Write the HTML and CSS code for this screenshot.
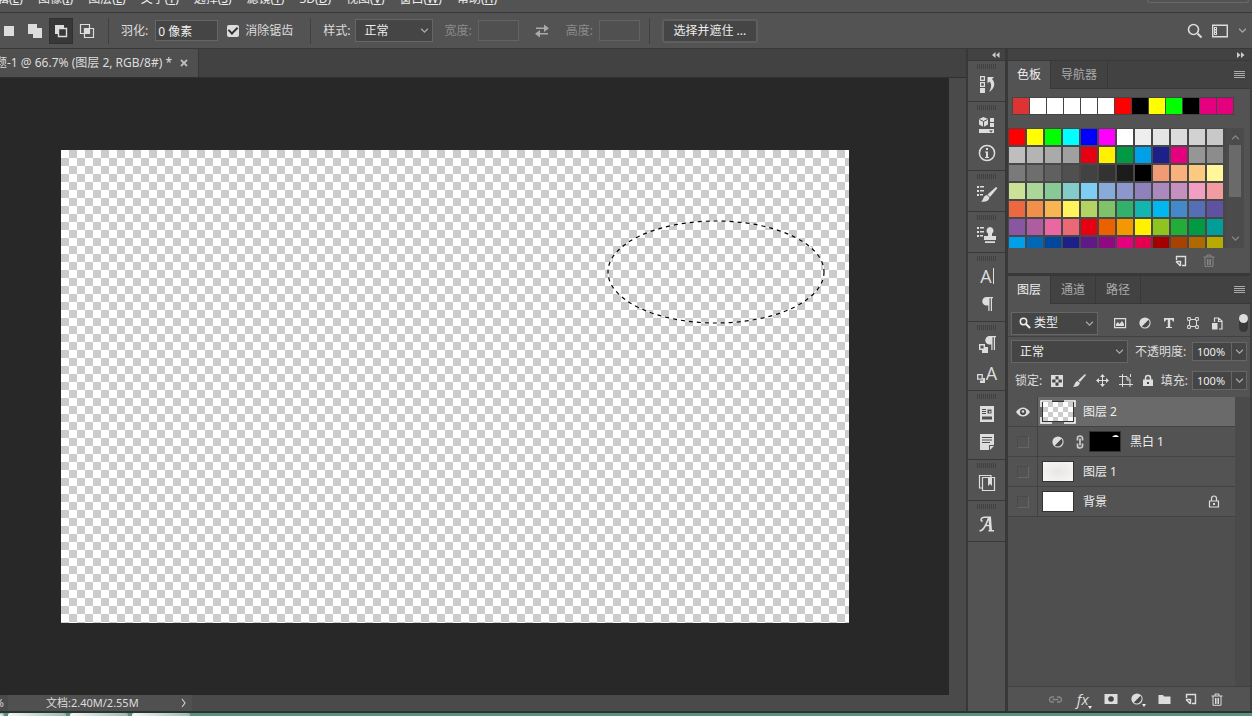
FILE: index.html
```html
<!DOCTYPE html>
<html lang="zh-CN">
<head>
<meta charset="utf-8">
<title>图像编辑器</title>
<link rel="stylesheet" href="styles.css">
</head>
<body>
<svg class="defs" aria-hidden="true">
  <symbol id="chev" viewBox="0 0 8 8"><path d="M1 2.5 4 5.5 7 2.5" fill="none" stroke="currentColor" stroke-width="1.1"/></symbol>
  <symbol id="half" viewBox="0 0 12 12"><circle cx="6" cy="6" r="5.6" fill="currentColor"/><path d="M2.8 9.6A4.900 4.900 0 0 0 9.600 2.800Z" fill="#484848"/></symbol>
  <symbol id="new" viewBox="0 0 12 12"><path d="M1.500 5V1.500h9v9H7M1 6.500h4.500v4.500M1 6.500 5.500 11" fill="none" stroke="currentColor" stroke-width="1.4"/></symbol>
  <symbol id="trash" viewBox="0 0 12 13"><path d="M.5 3h11M4 3V1h4v2M2 3v9.300h8V3M4.500 5v6M6 5v6M7.500 5v6" fill="none" stroke="currentColor"/></symbol>
  <symbol id="menu" viewBox="0 0 11 8"><path d="M0 .5h11M0 2.500h11M0 4.500h11M0 6.500h11" stroke="currentColor"/></symbol>
  <symbol id="para" viewBox="0 0 12 16"><path d="M5.500 1H12v1.200h-1V15H9.800V2.200H8.500V15H7.300V9.500H5.500A4.200 4.200 0 0 1 5.500 1Z" fill="currentColor"/></symbol>
</svg>
<div class="app">
  <nav class="menubar">
    <a href="#">编辑(<u>E</u>)</a><a href="#">图像(<u>I</u>)</a><a href="#">图层(<u>L</u>)</a><a href="#">文字(<u>Y</u>)</a><a href="#">选择(<u>S</u>)</a><a href="#">滤镜(<u>T</u>)</a><a href="#">3D(<u>D</u>)</a><a href="#">视图(<u>V</u>)</a><a href="#">窗口(<u>W</u>)</a><a href="#">帮助(<u>H</u>)</a>
    <span class="winbtns"></span>
  </nav>

  <header class="options">
    <div class="modes">
      <button class="mode" aria-label="新选区"><svg width="16" height="16"><path d="M3 3h10v10H3z" fill="#ddd"/></svg></button>
      <button class="mode" aria-label="添加到选区"><svg width="16" height="16"><path d="M1 1h9v4h5v10H6v-4H1z" fill="#ddd"/></svg></button>
      <button class="mode on" aria-label="从选区减去"><svg width="16" height="16"><path d="M2 2h9v3H5v6H2z" fill="#ddd"/><path d="M5.500 5.500h8v8h-8z" fill="#383838" stroke="#ddd" stroke-width="1.4"/></svg></button>
      <button class="mode" aria-label="与选区交叉"><svg width="16" height="16"><path d="M1.500 1.500h9v9h-9zM5.500 5.500h9v9h-9z" fill="none" stroke="#ddd" stroke-width="1.200"/><path d="M6 6h5v5H6z" fill="#ddd"/></svg></button>
    </div>
    <div class="opt first"><label for="feather">羽化:</label><input id="feather" class="field wide" value="0 像素"></div>
    <div class="opt check"><input type="checkbox" id="aa" checked><label for="aa">消除锯齿</label></div>
    <div class="opt style"><label for="style">样式:</label>
      <span class="pick"><select id="style"><option>正常</option></select><svg width="9" height="9"><use href="#chev"/></svg></span></div>
    <div class="opt dim"><label for="w">宽度:</label><input id="w" class="field" disabled></div>
    <button class="swap" aria-label="交换"><svg width="16" height="14"><path d="M2 3.500h8V.500l5 3.800-5 3.700V5H2zM14 9H6V6L1 9.700l5 3.800v-3h8z" fill="#aaa"/></svg></button>
    <div class="opt dim"><label for="h">高度:</label><input id="h" class="field" disabled></div>
    <div class="opt mask"><button class="push">选择并遮住 ...</button></div>
    <div class="right">
      <button aria-label="搜索"><svg width="16" height="16"><circle cx="6.500" cy="6.500" r="5" fill="none" stroke="#ddd" stroke-width="1.600"/><path d="m10.500 10.500 4 4" stroke="#ddd" stroke-width="2"/></svg></button>
      <button aria-label="工作区"><svg width="16" height="14"><path d="M.7 1.200h14.600v11.600H.7z" fill="none" stroke="#ddd" stroke-width="1.400"/><path d="M2 3h3v8H2z" fill="#ddd"/><path d="M3 4h1v1H3zm0 2.500h1v1H3zM3 9h1v1H3z" fill="#444"/></svg></button>
      <svg width="9" height="9"><use href="#chev"/></svg>
    </div>
  </header>

  <div class="main">
    <section class="document">
      <div class="doctabs"><div class="doctab"><span>题-1 @ 66.7% (图层 2, RGB/8#) *</span><button aria-label="关闭"><svg width="8" height="8"><path d="m1 1 6 6M7 1 1 7" stroke="#bbb" stroke-width="1.800"/></svg></button></div></div>
      <div class="view">
        <div class="desk"><div class="paper"><svg class="ants" width="220" height="106"><g fill="none" transform="translate(110 53)"><ellipse rx="108" ry="51" stroke="#fff"/><ellipse rx="108" ry="51" stroke="#000" stroke-width="1.200" stroke-dasharray="4 4"/></g></svg></div></div>
        <div class="vscroll"></div>
      </div>
      <footer class="status"><span class="pct">%</span><span class="info">文档:2.40M/2.55M</span><button aria-label="更多"><svg width="8" height="10"><path d="m2 1 3 4-3 4" fill="none" stroke="#ccc" stroke-width="1.200"/></svg></button></footer>
    </section>

    <aside class="dock">
      <div class="fold"><svg width="8" height="6"><path d="M3.500 0v6L0 3zM7.500 0v6L4 3z" fill="#ccc"/></svg></div>
      <div class="group"><button aria-label="历史记录"><svg width="18" height="20"><path d="M2.600 2.600h3.800v3.800H2.600zM2.600 8.600h3.800v3.800H2.600z" fill="none" stroke="#ddd" stroke-width="1.200"/><path d="M2 14h5v5H2zM9.500 3H16l-2 2c4 4 2.500 10-3 13 2.500-4 3-8 .5-10.500L9.500 9.500z" fill="#ddd"/></svg></button></div>
      <div class="group"><button aria-label="库"><svg width="18" height="20"><path d="m5.500 2 4.500 2v5.500l-4.500 2.500L1 9.500V4zM12 3h4v4h-4zM12 8h4v4h-4zM1 14h15v4H1z" fill="#ddd"/><path d="m1.500 4.500 4 2 4-2M5.500 6.500V12" fill="none" stroke="#535353"/><path d="M11 15.500h4l-2 2z" fill="#444"/></svg></button>
        <button aria-label="信息"><svg width="18" height="18"><circle cx="9" cy="9" r="7.600" fill="none" stroke="#ddd" stroke-width="1.500"/><path d="M8 4h2v2H8zM7 7.500h3V13h1v1H7v-1h1V8.500H7z" fill="#ddd"/></svg></button></div>
      <div class="group"><button aria-label="画笔设置"><svg width="22" height="20"><path d="M1 2h2v2H1zm3 0h4v1.500H4zM1 6h2v2H1zm3 0h4v1.500H4zM1 10h2v2H1zm3 0h3v1.500H4zM20 3l1.500 1-7.500 9-2.500-2.500zM11 11l2.500 2.500C13 17 9 18.500 5 17.500c2.500-1 2-6 6-6.500z" fill="#ddd"/></svg></button></div>
      <div class="group"><button aria-label="仿制源"><svg width="22" height="20"><path d="M1 2h2v2H1zm3 0h4v1.500H4zM1 6h2v2H1zm3 0h4v1.500H4zM1 10h2v2H1zm3 0h3v1.500H4zM14 2a3.600 3.600 0 0 1 2 6.500V11h4v4H8v-4h4V8.500A3.600 3.600 0 0 1 14 2zM9 16.300h10V18H9z" fill="#ddd"/></svg></button></div>
      <div class="group"><button class="glyph" aria-label="字符">A<i></i></button>
        <button aria-label="段落"><svg width="14" height="16"><use href="#para"/></svg></button></div>
      <div class="group"><button aria-label="段落样式"><svg width="18" height="20"><path d="M1.700 9.700h4.600v4.600H1.700z" fill="none" stroke="#ddd" stroke-width="1.400"/><path d="M7 12h3v6H4v-3h3z" fill="#ddd"/><use href="#para" x="6" y="0" width="12" height="16"/></svg></button>
        <button class="glyph" aria-label="字符样式"><svg width="9" height="10"><path d="M.7.700h4.500v4.500H.7z" fill="none" stroke="#ddd" stroke-width="1.300"/><path d="M6 4h2v5H3V6.500h3z" fill="#ddd"/></svg>A</button></div>
      <div class="group"><button aria-label="属性"><svg width="16" height="18"><path d="M1 1h14v16H1z" fill="#ddd"/><path d="M3 4.500h4M3 6.500h4M3 8.500h4" stroke="#505050"/><path d="M8.500 4.500h4v4h-4zM3 11.500h10v3H3z" fill="#505050"/><path d="M10 6h1.500v1.500H10z" fill="#ddd"/></svg></button>
        <button aria-label="注释"><svg width="16" height="18"><path d="M1 1h14v11h-5v5H1zM11 13h4l-4 4z" fill="#ddd"/><path d="M3 4.500h10M3 7h10M3 9.500h8" stroke="#505050"/></svg></button></div>
      <div class="group"><button aria-label="图层复合"><svg width="18" height="18"><path d="M4.500 3.500h12v13h-12zM4 14H1.500V1.500H13V3" fill="none" stroke="#ddd" stroke-width="1.200"/><path d="M10 3h4v9l-2-2-2 2z" fill="#ddd"/></svg></button></div>
      <div class="group"><button aria-label="字形"><svg width="18" height="18"><path d="M1.500 15.500c4 1.500 7-7 9.500-13.500l1.500 13.500M10.500 15.800H16M6.500 10.500h6M4.500 6.500C2 5.500 3 2.500 6 2.300h7" fill="none" stroke="#ddd" stroke-width="1.500"/><path d="m10.500 3 2.500-1 1 13.500h-2.500z" fill="#ddd"/></svg></button></div>
    </aside>

    <aside class="panels">
      <div class="fold end"><svg width="8" height="6"><path d="M0 0v6l3.500-3zM4 0v6l3.500-3z" fill="#ccc"/></svg></div>
      <section class="swatches">
        <div class="tabs"><button class="on">色板</button><button>导航器</button><svg class="burger" width="11" height="8"><use href="#menu"/></svg></div>
        <div class="recent" id="recent"></div>
        <div class="sw"><div class="grid" id="grid"></div>
          <div class="bar"><svg width="9" height="9" class="up"><use href="#chev"/></svg><i></i><svg width="9" height="9" class="down"><use href="#chev"/></svg></div></div>
        <div class="swfoot"><button aria-label="新建色板"><svg width="12" height="12"><use href="#new"/></svg></button><button class="off" aria-label="删除色板"><svg width="12" height="13"><use href="#trash"/></svg></button></div>
      </section>

      <section class="layers">
        <div class="tabs"><button class="on">图层</button><button>通道</button><button>路径</button><svg class="burger" width="11" height="8"><use href="#menu"/></svg></div>
        <div class="filter">
          <span class="pick kind"><svg class="mag" width="12" height="12"><circle cx="4.500" cy="4.500" r="3.200" fill="none" stroke="#eee" stroke-width="1.500"/><path d="m7 7 4 4" stroke="#eee" stroke-width="2.200"/></svg><select aria-label="类型"><option>类型</option></select><svg width="9" height="9"><use href="#chev"/></svg></span>
          <div class="kinds">
            <button aria-label="像素"><svg width="14" height="12"><path d="M1.600 1.600h11v9h-11z" fill="none" stroke="#ddd" stroke-width="1.200"/><path d="M3 9V7l2-2 1.500 2L9 4l2 3v2z" fill="#ddd"/></svg></button>
            <button aria-label="调整"><svg width="12" height="12"><use href="#half"/></svg></button>
            <button aria-label="文字"><svg width="12" height="12"><path d="M1 1h10v3.500H9.800L9 2.800H7.200V10H9v1H3v-1h1.800V2.800H3l-.8 1.700H1z" fill="#ddd"/></svg></button>
            <button aria-label="形状"><svg width="12" height="12"><path d="M2.500 2.500h7v7h-7z" fill="none" stroke="#ddd"/><path d="M.6.600h2.800v2.800H.6zM8.600.600h2.800v2.800H8.600zM.6 8.600h2.800v2.800H.6zM8.600 8.600h2.800v2.800H8.600z" fill="#535353" stroke="#ddd"/></svg></button>
            <button aria-label="智能对象"><svg width="12" height="13"><path d="M3.500 5V1h4l3.500 3v8H8M7.500 1v3.500H11" fill="none" stroke="#ddd" stroke-width="1.200"/><path d="M1 6h5.500v6.500H1z" fill="#ddd"/></svg></button>
          </div>
          <span class="toggle"></span>
        </div>
        <div class="blend"><span class="pick mode-pick"><select aria-label="混合模式"><option>正常</option></select><svg width="9" height="9"><use href="#chev"/></svg></span>
          <label for="op">不透明度:</label><span class="num"><input id="op" value="100%"><button aria-label="不透明度滑块"><svg width="9" height="9"><use href="#chev"/></svg></button></span></div>
        <div class="blend lock"><span>锁定:</span>
          <div class="locks">
            <button aria-label="透明像素"><svg width="12" height="12"><path d="M.6.600h10.800v10.800H.6z" fill="#444" stroke="#ddd" stroke-width="1.200"/><path d="M4.500 4.500h3v3h-3zM1 1h3.500v3.500H1zM7.500 1H11v3.500H7.500zM1 7.500h3.500V11H1zM7.500 7.500H11V11H7.500z" fill="#ddd"/></svg></button>
            <button aria-label="图像像素"><svg width="13" height="13"><path d="m12 0 1 1-6 7-2-1.500zM4.500 7 7 9c-1 3-4 4-7 4 2-2 1.500-5 4.500-6z" fill="#ddd"/></svg></button>
            <button aria-label="位置"><svg width="13" height="13"><path d="M6.500 1v11M1 6.500h11" stroke="#ddd"/><path d="m6.500 0 2.500 3H4zM6.500 13 9 10H4zM0 6.500 3 4v5zM13 6.500 10 4v5z" fill="#ddd"/></svg></button>
            <button aria-label="画板"><svg width="14" height="13"><path d="M3.500 0v13M0 2.500h8l3 3V13M0 10.500h14M11.500 0v3M8 3v3h3" fill="none" stroke="#ddd"/></svg></button>
            <button aria-label="全部"><svg width="10" height="13"><path d="M2.500 6V4a2.500 2.500 0 0 1 5 0v2" fill="none" stroke="#ddd" stroke-width="1.500"/><path d="M0 5.500h10V12H0z" fill="#ddd"/><path d="M4 8h2v2H4z" fill="#444"/></svg></button>
          </div>
          <label for="fill">填充:</label><span class="num"><input id="fill" value="100%"><button aria-label="填充滑块"><svg width="9" height="9"><use href="#chev"/></svg></button></span></div>
        <div class="listwrap">
          <ul class="list">
            <li class="sel"><button class="eye" aria-label="可见"><svg width="14" height="10"><path d="M0 5c4-6 10-6 14 0-4 6-10 6-14 0z" fill="#ddd"/><circle cx="7" cy="5" r="3" fill="#444"/><circle cx="7" cy="4.500" r="1.300" fill="#ddd"/></svg></button>
              <div class="row"><span class="frame"><span class="thumb check8"></span><svg width="36" height="24"><path d="M1 7V1h11M24 1h11v6M35 17v6H24M12 23H1v-6" fill="none" stroke="#fff" stroke-width="1.500"/></svg></span><span class="name">图层 2</span></div></li>
            <li><button class="eye" aria-label="隐藏"><i></i></button>
              <div class="row adj"><svg width="12" height="12"><use href="#half"/></svg><svg class="chain" width="8" height="14"><path d="M1.500 5.500V3a2.500 2 0 0 1 5 0v2.500M1.500 8.500V11a2.500 2 0 0 0 5 0V8.500M4 3.500v7" fill="none" stroke="#ccc" stroke-width="1.700"/></svg><span class="thumb black"><svg width="30" height="18"><path d="M22 5q4-4 7 0z" fill="#fff"/></svg></span><span class="name">黑白 1</span></div></li>
            <li><button class="eye" aria-label="隐藏"><i></i></button>
              <div class="row"><span class="thumb soft"></span><span class="name">图层 1</span></div></li>
            <li><button class="eye" aria-label="隐藏"><i></i></button>
              <div class="row"><span class="thumb"></span><span class="name">背景</span><svg class="padlock" width="12" height="13"><path d="M3.500 6V3.500a2.500 2.500 0 0 1 5 0V6M1.500 6h9v6h-9z" fill="none" stroke="#ddd" stroke-width="1.200"/><path d="M5 8h2v2H5z" fill="#ddd"/></svg></div></li>
          </ul>
          <div class="gutter"></div>
        </div>
        <div class="tools">
          <button class="off" aria-label="链接图层"><svg width="15" height="9"><path d="M6 2H4a2.500 2.500 0 0 0 0 5h2M9 2h2a2.500 2.500 0 0 1 0 5H9M4.500 4.500h6" fill="none" stroke="currentColor" stroke-width="1.300"/></svg></button>
          <button class="fx" aria-label="图层样式">fx<svg width="4" height="3"><path d="M0 0h4L2 3z" fill="#eee"/></svg></button>
          <button aria-label="蒙版"><svg width="14" height="12"><path d="M.5 1h13v10H.5z" fill="#ddd"/><circle cx="7" cy="6" r="2.800" fill="#444"/></svg></button>
          <button class="fx" aria-label="调整图层"><svg width="12" height="12"><use href="#half"/></svg><svg width="4" height="3"><path d="M0 0h4L2 3z" fill="#eee"/></svg></button>
          <button aria-label="新建组"><svg width="13" height="11"><path d="M.5 1H5l1 1.500h6.500V10H.5z" fill="#ddd"/></svg></button>
          <button aria-label="新建图层"><svg width="12" height="12"><use href="#new"/></svg></button>
          <button aria-label="删除图层"><svg width="12" height="13"><use href="#trash"/></svg></button>
        </div>
      </section>
    </aside>
  </div>
  <div class="strip"><i></i><i></i><i></i><i></i></div>
</div>
<script src="app.js"></script>
</body>
</html>
```
FILE: styles.css
```css
* { box-sizing: border-box; }
body { margin: 0; overflow: hidden; background: #535353; color: #ddd; font: 12px/16px "Noto Sans", "Noto Sans CJK SC", sans-serif; }
button { display: flex; align-items: center; justify-content: center; border: 0; padding: 0; background: none; color: inherit; font: inherit; }
input, select { font: inherit; color: #eee; border: 1px solid #666; background: #454545; min-width: 0; margin: 0; }
svg { display: block; flex: none; }
.defs { position: absolute; width: 0; height: 0; }
.app { display: flex; flex-direction: column; height: 100vh; }

.menubar { flex: none; height: 13px; display: flex; align-items: flex-end; gap: 15px; padding: 0 3px 5px 0; margin-left: -15px; overflow: hidden; border-bottom: 1px solid #383838; }
.menubar a { color: #eee; text-decoration: none; white-space: nowrap; }
.winbtns { margin-left: auto; align-self: flex-start; width: 102px; height: 3px; border: 1px solid #696969; border-top: 0; border-radius: 0 0 3px 3px; }

.options { flex: none; height: 36px; display: flex; align-items: center; border-bottom: 1px solid #383838; white-space: nowrap; }
.modes { display: flex; gap: 2px; padding-right: 9px; margin-left: -3px; }
.mode { width: 24px; height: 26px; }
.mode.on { background: #383838; border: 1px solid #303030; }
.opt { display: flex; align-items: center; gap: 6px; margin-right: 9px; }
.first, .style, .mask { border-left: 1px solid #404040; padding-left: 12px; height: 26px; }
.first { gap: 7px; }
.check { margin-right: 17px; }
.style { margin-right: 11px; }
.style label { margin-right: -1px; }
.field { width: 41px; height: 21px; padding: 0 2px; }
.wide { width: 63px; }
.dim { color: #8b8b8b; }
.dim .field { background: #505050; border-color: #636363; }
.check input { appearance: none; width: 12px; height: 12px; border: 0; border-radius: 2px; background: #ddd; display: grid; place-items: center; }
.check input:checked::after { content: ""; width: 4px; height: 7px; border: solid #333; border-width: 0 2px 2px 0; transform: rotate(45deg); margin-bottom: 2px; }
.swap { margin: 0 16px 0 6px; }
.push { width: 96px; height: 24px; background: #454545; border: 2px solid #5e5e5e; border-radius: 3px; color: #eee; }
.right { margin-left: auto; display: flex; align-items: center; gap: 15px; padding-right: 5px; }
.right svg:last-child { margin-left: -5px; color: #aaa; }
.right button:first-child svg { margin-right: -1px; }
.pick { display: grid; align-items: center; grid-template-columns: 1fr 9px 4px; width: 78px; height: 23px; color: #aaa; }
.pick select { grid-area: 1 / 1 / 2 / 4; width: 100%; height: 100%; appearance: none; padding: 0 8px; }
.pick > svg:last-child { grid-area: 1 / 2; z-index: 1; pointer-events: none; }

.main { flex: 1; min-height: 0; display: flex; }
.document { flex: 1; min-width: 0; display: flex; flex-direction: column; border-right: 2px solid #383838; }
.doctabs { flex: none; height: 29px; display: flex; background: #424242; border-bottom: 1px solid #303030; }
.doctab { display: flex; align-items: center; gap: 8px; padding-right: 10px; background: #4f4f4f; border-right: 1px solid #383838; white-space: nowrap; width: 199px; justify-content: flex-end; }
.view { flex: 1; display: flex; min-height: 0; }
.desk { flex: 1; display: flex; background: #282828; padding: 72px 100px 72px 61px; }
.paper { flex: 1; position: relative; background: repeating-conic-gradient(#ccc 0 25%, #fff 0 50%) 0 0 / 16px 16px; }
.ants { position: absolute; left: 545px; top: 69px; }
.vscroll { width: 17px; background: #4a4a4a; }
.status { flex: none; height: 16px; display: flex; align-items: center; background: #4a4a4a; font-size: 11px; }
.status .pct { width: 8px; display: flex; justify-content: flex-end; padding-right: 4px; }
.status .info { background: #505050; padding-left: 38px; width: 168px; }
.status button { width: 16px; height: 16px; background: #505050; }

.fold { flex: none; height: 12px; display: flex; align-items: center; justify-content: center; padding-left: 18px; background: #424242; border-bottom: 1px solid #383838; }
.fold.end { justify-content: flex-end; padding-right: 5px; }
.dock { width: 38px; flex: none; border-right: 1px solid #383838; }
.group { border-bottom: 1px solid #383838; padding: 3px 0; }
.group::before { content: ""; display: block; width: 20px; height: 5px; margin: 0 auto; background: repeating-linear-gradient(90deg, #404040 0 1px, #535353 1px 2px); }
.group button { width: 100%; height: 29px; padding-left: 1px; }
.group button + button { height: 28px; }
.glyph { font-size: 18px; font-family: "Open Sans", sans-serif; }
.glyph i { width: 1px; height: 16px; background: #ddd; margin-left: 1px; }
.glyph svg { align-self: flex-end; margin-bottom: 3px; }

.panels { flex: none; width: 246px; display: flex; flex-direction: column; border-left: 2px solid #383838; border-right: 2px solid #404040; }
.tabs { display: flex; height: 28px; background: #424242; border-bottom: 1px solid #383838; align-items: center; color: #aaa; }
.tabs button { height: 28px; padding: 0 10px; border-right: 1px solid #383838; }
.tabs .on { background: #535353; color: #eee; padding: 0 9px; }
.burger { margin: 0 5px 0 auto; }
.swatches { flex: none; border-bottom: 3px solid #383838; }
.recent { display: flex; gap: 1px; width: max-content; margin: 8px 0 0 4px; background: #444; border: 1px solid #444; }
.recent i { width: 16px; height: 16px; }
.sw { display: flex; height: 120px; margin-top: 13px; overflow: hidden; }
.grid { display: grid; grid-template-columns: repeat(12, 16px); grid-auto-rows: 16px; gap: 2px; padding: 1px 3px 0 1px; background: #484848; }
.bar { width: 18px; background: #4b4b4b; display: flex; flex-direction: column; align-items: center; color: #888; padding: 5px 0; }
.bar i { width: 12px; height: 52px; background: #6a6a6a; margin: 3px 0 auto; }
.up { transform: rotate(180deg); }
.swfoot { display: flex; justify-content: flex-end; align-items: center; gap: 16px; height: 25px; padding-right: 35px; }
.off { color: #888; }

.layers { flex: 1; display: flex; flex-direction: column; min-height: 0; white-space: nowrap; }
.filter { display: flex; align-items: center; height: 33px; padding: 7px 2px 1px 3px; border-bottom: 1px solid #404040; }
.kind { width: 87px; }
.kind select { padding-left: 22px; }
.kind .mag { grid-area: 1 / 1; z-index: 1; margin-left: 8px; pointer-events: none; }
.kinds { display: flex; flex: 1; justify-content: space-between; padding: 0 16px 0 15px; }
.toggle { width: 9px; height: 18px; border-radius: 5px; background: #383838; }
.toggle::before { content: ""; display: block; width: 9px; height: 9px; border-radius: 50%; background: #ddd; }
.blend { display: flex; align-items: center; height: 29px; padding: 0 3px; }
.mode-pick { width: 117px; margin-right: 7px; }
.blend .num { margin-left: auto; }
.lock { padding-left: 7px; }
.lock label { margin-right: 4px; }
.num { display: flex; width: 55px; height: 19px; border: 1px solid #666; background: #454545; color: #aaa; }
.num input { flex: 1; border: 0; padding: 0 4px; background: none; font-size: 11px; }
.num button { width: 15px; border-left: 1px solid #666; }
.locks { display: flex; flex: 1; justify-content: space-between; padding: 0 8px 0 9px; }
.listwrap { flex: 1; display: flex; background: #4f4f4f; min-height: 0; margin-top: 2px; }
.list { flex: 1; list-style: none; margin: 0; padding: 0; }
.list li { display: flex; height: 30px; background: #535353; border-bottom: 1px solid #434343; }
.eye { width: 30px; border-right: 1px solid #434343; }
.eye i { width: 12px; height: 12px; border: 1px solid #666; border-top-color: #4a4a4a; border-left-color: #4a4a4a; }
.row { flex: 1; display: flex; align-items: center; padding: 0 15px 0 4px; gap: 9px; }
.sel .row { background: #6a6a6a; padding-left: 2px; gap: 7px; }
.thumb { width: 32px; height: 21px; background: #fff; border: 1px solid #333; }
.frame { display: grid; place-items: center; }
.frame > * { grid-area: 1 / 1; }
.check8 { background: repeating-conic-gradient(#ccc 0 25%, #fff 0 50%) 0 0 / 10px 10px; }
.black { background: #000; }
.soft { background: radial-gradient(#e8e6e3, #f8f7f6); }
.adj { padding-left: 14px; }
.adj .chain { margin: 0 -4px 0 3px; }
.name { color: #eee; }
.padlock { margin-left: auto; }
.gutter { width: 15px; background: #4a4a4a; }
.tools { flex: none; height: 25px; display: flex; align-items: center; justify-content: space-between; border-top: 1px solid #404040; padding: 0 27px 0 40px; }
.fx { font: italic 15px/16px "Open Sans", sans-serif; }
.fx svg:last-child { align-self: flex-end; margin-left: -1px; margin-right: -2px; margin-bottom: -2px; }

.strip { flex: none; height: 5px; display: flex; gap: 4px; background: #5c8f80; border-top: 2px solid #2a3532; }
.strip i { width: 58px; background: linear-gradient(90deg, #f4f7f6, #9db8b0); border-radius: 2px 2px 0 0; }
.strip i:first-child { width: 4px; }
```
FILE: app.js
```js
const recent = "d33 fff fff fff fff fff f00 000 ff0 0f0 000 e4007f e4007f";
const colors = `f00 ff0 0f0 0ff 00f f0f fff eee e5e5e5 dcdcdc d2d2d2 c8c8c8
bebebe b4b4b4 aaa a0a0a0 e60012 fff100 009944 00a0e9 1d2088 e4007f 969696 8c8c8c
7a7a7a 6e6e6e 606060 505050 424242 333 1c1c1c 000 f19b76 f8b07c fbca80 fff799
cce198 acd598 89c997 84ccc9 7ecef4 88abda 8c97cb 8f82bc aa89bd c490bf f29ec2 f29c9f
eb6841 f19149 f8b551 fff45c b3d465 80c269 32b16c 13b5b1 00b7ee 448aca 556fb5 5f52a0
8957a1 ae5da1 ea68a2 eb6877 e60012 eb6100 f39800 fff100 8fc31f 22ac38 009944 009e96
00a0e9 0068b7 00479d 1d2088 601986 920783 e4007f e5004f a40000 a84200 ac6a00 b7aa00`;
function fill(id, list) {
  const box = document.getElementById(id);
  list.split(/\s+/).forEach(c => {
    const chip = document.createElement("i");
    chip.style.background = "#" + c;
    box.append(chip);
  });
}
fill("recent", recent);
fill("grid", colors);
```
